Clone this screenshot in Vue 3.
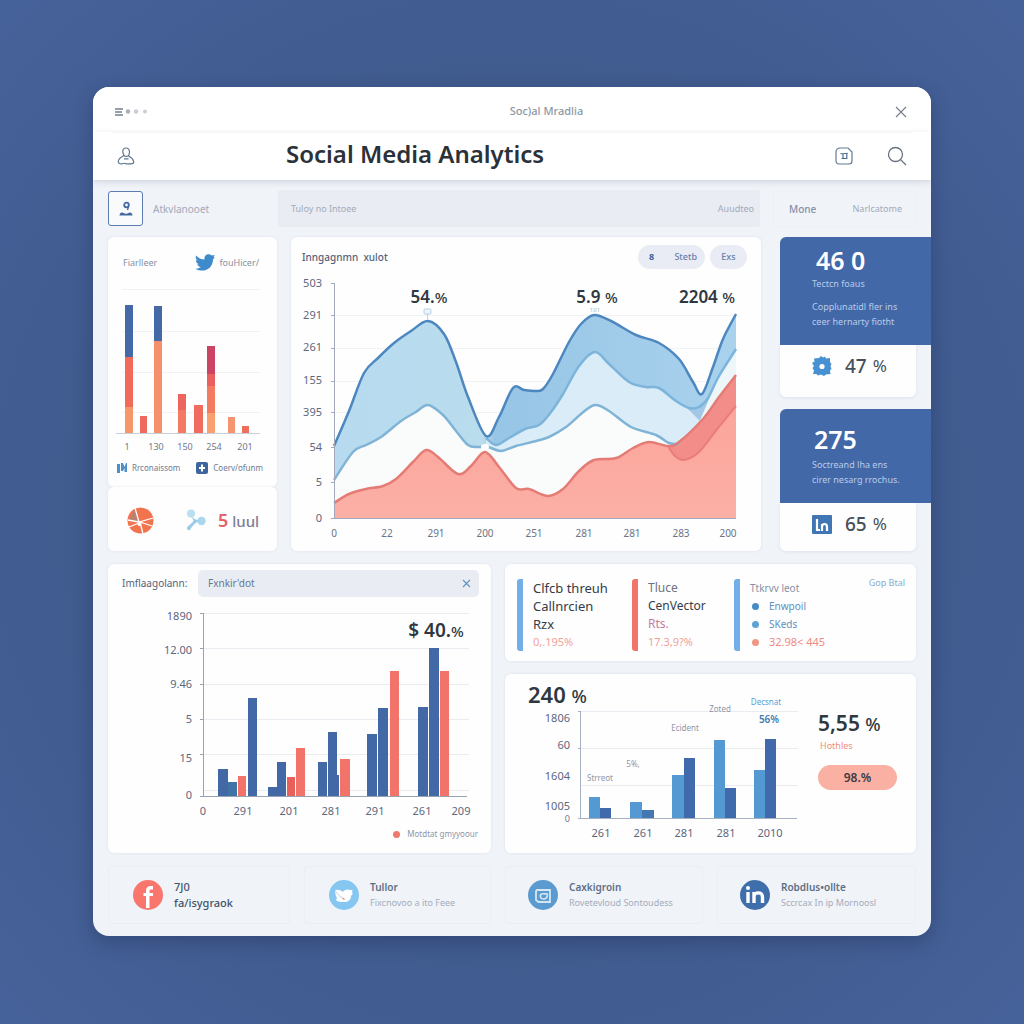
<script setup>
// Smooth line through a list of points (Catmull-Rom converted to Bezier)
const smooth = (pts) => {
  let d = `M${pts[0][0]} ${pts[0][1]}`
  for (let i = 0; i < pts.length - 1; i++) {
    const a = pts[i - 1] || pts[i]
    const b = pts[i]
    const c = pts[i + 1]
    const e = pts[i + 2] || c
    const x1 = b[0] + (c[0] - a[0]) / 6
    const y1 = b[1] + (c[1] - a[1]) / 6
    const x2 = c[0] - (e[0] - b[0]) / 6
    const y2 = c[1] - (e[1] - b[1]) / 6
    d += `C${x1.toFixed(1)} ${y1.toFixed(1)} ${x2.toFixed(1)} ${y2.toFixed(1)} ${c[0]} ${c[1]}`
  }
  return d
}
const area = (pts, base) => `${smooth(pts)}V${base}H${pts[0][0]}Z`

const reach = [[43, 176], [58, 141], [73, 103], [87, 88], [103, 73], [120, 61], [137, 51], [153, 64], [165, 92], [177, 127], [195, 166], [208, 147], [222, 118], [233, 120], [245, 121], [252, 119], [262, 104], [278, 72], [290, 54], [303, 45], [320, 51], [345, 65], [368, 73], [388, 89], [402, 112], [411, 124], [422, 97], [432, 69], [445, 44]]
const views = [[195, 168], [205, 175], [218, 168], [234, 159], [248, 155], [260, 142], [272, 124], [288, 96], [304, 82], [318, 94], [338, 112], [355, 117], [368, 118], [385, 131], [398, 138], [408, 137], [417, 128], [428, 106], [445, 79]]
const clicks = [[43, 210], [62, 182], [75, 175], [90, 167], [110, 151], [125, 142], [137, 135], [152, 145], [165, 161], [177, 175], [187, 177], [197, 177], [210, 181], [225, 176], [245, 171], [258, 167], [275, 157], [290, 144], [304, 135], [318, 141], [340, 157], [365, 165], [378, 173], [388, 174]]
const sales = [[43, 233], [58, 224], [75, 219], [92, 216], [105, 209], [122, 192], [135, 180], [147, 187], [167, 204], [180, 196], [194, 182], [208, 197], [225, 218], [238, 219], [257, 226], [272, 219], [288, 201], [303, 190], [325, 188], [342, 178], [358, 172], [377, 176], [388, 172], [412, 149], [428, 127], [445, 105]]
const costs = [[377, 176], [384, 186], [393, 190], [408, 182], [427, 158], [445, 136]]

const areaY = [['503', 13], ['291', 45], ['261', 77], ['155', 110], ['395', 142], ['54', 177], ['5', 212], ['0', 248]]
const areaX = [['0', 43], ['22', 96], ['291', 145], ['200', 194], ['251', 243], ['281', 293], ['281', 341], ['283', 390], ['200', 437]]

// [x, width, stacked parts as [top, bottom, colour]]
const stacks = [
  [17, 8, [[25, 77, '#4569a6'], [77, 127, '#f26a5c'], [127, 153, '#f7956b']]],
  [32, 7, [[136, 153, '#ee6a60']]],
  [46, 8, [[26, 61, '#4569a6'], [61, 153, '#f6906b']]],
  [70, 8, [[114, 130, '#ee6560'], [130, 153, '#f37b64']]],
  [86, 9, [[125, 153, '#ef6c5f']]],
  [99, 8, [[66, 94, '#cb4464'], [94, 106, '#e9605f'], [106, 133, '#f27b62'], [133, 153, '#f8a06f']]],
  [120, 7, [[137, 153, '#f5946f']]],
  [134, 7, [[146, 153, '#ee6f5e']]],
]
const stackX = [['1', 19], ['130', 48], ['150', 77], ['254', 106], ['201', 137]]

const NAVY = '#4269a5'
const CORAL = '#f1736a'
const groupBars = [
  [110, 10, 169, NAVY], [120, 9, 182, '#3f74a6'], [130, 8, 176, CORAL], [140, 9, 98, NAVY],
  [160, 9, 187, NAVY], [169, 9, 162, NAVY], [179, 8, 177, '#e8605c'], [188, 9, 148, CORAL],
  [210, 9, 162, NAVY], [220, 9, 132, NAVY], [229, 2, 175, NAVY], [232, 10, 159, CORAL],
  [259, 10, 134, NAVY], [270, 10, 108, NAVY], [282, 9, 71, CORAL],
  [310, 10, 107, NAVY], [321, 10, 48, NAVY], [332, 9, 71, CORAL],
]
const groupY = [['1890', 16], ['12.00', 50], ['9.46', 84], ['5', 119], ['15', 158], ['0', 195]]
const groupX = [['0', 95], ['291', 135], ['201', 181], ['281', 223], ['291', 267], ['261', 314], ['209', 353]]

const SKY = '#5599d3'
const BLUE = '#416aac'
const pairBars = [
  [84, 11, 123, SKY], [95, 11, 134, BLUE], [125, 12, 128, SKY], [137, 12, 136, '#4378b0'],
  [167, 12, 101, SKY], [179, 11, 84, BLUE], [209, 11, 66, SKY], [220, 11, 114, BLUE],
  [249, 11, 96, SKY], [260, 11, 65, BLUE],
]
const pairY = [['1806', 44], ['60', 71], ['1604', 102], ['1005', 132], ['0', 144]]
const pairX = [['261', 96], ['261', 138], ['281', 179], ['281', 221], ['2010', 265]]
</script>

<template>
  <div class="page">
    <div class="window">
      <div class="titlebar">
        <button class="icon-btn" aria-label="Menu">
          <svg width="34" height="10" viewBox="0 0 34 10">
            <path d="M1 2h8M1 5h7M1 8h8" stroke="#75808e" stroke-width="1.3" />
            <circle cx="14" cy="4.500" r="2.200" fill="#a9b0b9" />
            <circle cx="22" cy="4.500" r="2.200" fill="#c8cdd3" />
            <circle cx="31" cy="4.500" r="2" fill="#ccd0d6" />
          </svg>
        </button>
        <span class="caption">Soc)al Mradlia</span>
        <button class="icon-btn" aria-label="Close">
          <svg width="12" height="12" viewBox="0 0 12 12"><path d="M1 1l10 10M11 1L1 11" stroke="#747c87" stroke-width="1.1" /></svg>
        </button>
      </div>

      <header class="header">
        <button class="icon-btn" aria-label="Profile">
          <svg width="18" height="18" viewBox="0 0 18 18" fill="none" stroke="#5f7690" stroke-width="1.2">
            <path d="M9 1C6.600 1 5.600 2.800 5.800 5C6 6.700 6.800 8 7 8.500C5 9.500 1.500 12 1.200 14.500C1.200 16.500 3 17 5 16.800C7 16 8 16 9 16.700C10 17.200 12 16.800 14 16.900C16 17 17 16 16.600 14.300C16 12 13.500 10 11.500 8.800C12 7.500 12.600 6.500 12.500 4.600C12.200 2.200 11 1 9 1Z" />
            <path d="M6.600 8.400C8 9.400 10.500 9.400 11.500 8.800M7 11.800h4.500" />
          </svg>
        </button>
        <h1>Social Media Analytics</h1>
        <div class="header-tools">
          <button class="icon-btn" aria-label="Apps">
            <svg width="18" height="18" viewBox="0 0 18 18" fill="none" stroke="#627a95" stroke-width="1.2">
              <path d="M5 1h8l4 4v9a3 3 0 0 1-3 3H4a3 3 0 0 1-3-3V5a4 4 0 0 1 4-4z" />
              <path d="M5.500 6.500L8 7v4.500M8.500 6.500h3.300v5H6.500M11.500 7l1-1" stroke="#4d6d93" stroke-width="1.200" />
            </svg>
          </button>
          <button class="icon-btn" aria-label="Search">
            <svg width="20" height="20" viewBox="0 0 20 20" fill="none" stroke="#68717d" stroke-width="1.300">
              <circle cx="8.500" cy="8.500" r="7" /><path d="M13.600 13.600L19 19" />
            </svg>
          </button>
        </div>
      </header>

      <nav class="toolbar">
        <div class="account">
          <button class="avatar" aria-label="Account">
            <svg width="14" height="16" viewBox="0 0 14 16">
              <circle cx="7.500" cy="4" r="2.300" fill="none" stroke="#4468a0" stroke-width="1.800" />
              <path d="M9.500 5.500L8.500 9" stroke="#4468a0" stroke-width="1.300" />
              <path d="M.5 14.500C.5 12 2.500 11 4 11.800C6 13 8 13 10 11.800C11.500 11 13.500 12 13.500 14.500Z" fill="#4468a0" />
            </svg>
          </button>
          <a href="#">Atkvlanooet</a>
        </div>
        <div class="searchbar">
          <input aria-label="Search" placeholder="Tuloy no Intoee" />
          <a href="#">Auudteo</a>
        </div>
        <div class="links">
          <a href="#" class="strong">Mone</a>
          <a href="#">Narlcatome</a>
        </div>
      </nav>

      <main>
        <div class="top-row">
          <div class="left-col">
            <section class="card stack-card">
              <div class="stack-head">
                <span>Fiarlleer</span>
                <span class="tw">
                  <svg width="20" height="17" viewBox="0 0 20 17"><path d="M1 1.500C3.500 4 6 5.500 9.500 5.600C9 2.500 11 .3 13.500 .3C15 .3 16 .9 16.800 1.600L19.600 .9L18.600 3.200L19.800 3.300L18 5.400C18 11.500 13.500 16.600 7 16.600C4.300 16.600 2 16 .3 14.800C2.500 14.800 4.400 14.200 5.800 13C3.900 12.800 2.700 11.700 2.200 10.300L3.900 10.200C2 9.500 .9 8 .9 6.200L2.500 6.600C.8 5.200 .4 3.300 1 1.500Z" fill="#3f8acb" /></svg>
                  fouHicer/
                </span>
              </div>
              <svg class="chart" viewBox="0 0 169 175">
                <path d="M14 9.500H152M14 51.500H152M14 92.500H152M14 132.500H152" class="grid" />
                <g v-for="(s, i) in stacks" :key="i">
                  <rect v-for="(p, j) in s[2]" :key="j" :x="s[0]" :y="p[0]" :width="s[1]" :height="p[1] - p[0]" :fill="p[2]" />
                </g>
                <path d="M8 153.500H152" stroke="#c9cfda" />
                <text v-for="(t, i) in stackX" :key="i" :x="t[1]" y="170" class="tick small mid">{{ t[0] }}</text>
              </svg>
              <div class="stack-legend">
                <span>
                  <svg width="10" height="10" viewBox="0 0 10 10"><path d="M0 1h3v9H0zM4 0h2l1.500 4L9 0h1v9H7.500V5L6 8H4z" fill="#4c8fc9" /></svg>
                  Rrconaissom
                </span>
                <span>
                  <svg width="12" height="12" viewBox="0 0 12 12"><rect width="12" height="12" rx="2" fill="#3f659f" /><path d="M6 2.500v7M3 6h6" stroke="#fff" stroke-width="2" /></svg>
                  Coerv/ofunm
                </span>
              </div>
            </section>
            <section class="card mini">
              <svg width="27" height="27" viewBox="0 0 27 27">
                <circle cx="13.500" cy="13.500" r="13" fill="#f2744f" />
                <path d="M8 2L2 13L12 15Z" fill="#b98272" />
                <path d="M8 1L12 15L26 11M12 15L1 13M12 16L2 20M13 15L16 27M13 15L25 19" stroke="#fff" stroke-width="1.300" fill="none" />
                <circle cx="12.500" cy="17" r="2" fill="#fff" />
              </svg>
              <svg width="20" height="22" viewBox="0 0 20 22">
                <ellipse cx="5" cy="4.500" rx="4" ry="4" fill="#b9dff0" /><circle cx="15.500" cy="12" r="4.200" fill="#aad6ee" />
                <path d="M5 7C7 9 9 11 14 11.500C9 14 7 16 4 21C1 22 0 19 2 17C5 15 7 13 7.500 11.500Z" fill="#9ecbe8" />
              </svg>
              <strong><b>5</b> luul</strong>
            </section>
          </div>

          <section class="card">
            <div class="area-head">
              <h2>Inngagnmn &nbsp;xulot</h2>
              <div class="pills">
                <button class="pill wide"><b>8</b><span>Stetb</span></button>
                <button class="pill">Exs</button>
              </div>
            </div>
            <svg class="chart" viewBox="0 0 470 281">
              <defs>
                <linearGradient id="fillReach" x1="43" x2="445" gradientUnits="userSpaceOnUse">
                  <stop offset="0" stop-color="#b7daf0" /><stop offset=".37" stop-color="#b9dded" />
                  <stop offset=".4" stop-color="#97c5e6" /><stop offset="1" stop-color="#a9d2ed" />
                </linearGradient>
                <linearGradient id="fillSales" x1="0" y1="170" x2="0" y2="248" gradientUnits="userSpaceOnUse">
                  <stop offset="0" stop-color="#fca79e" /><stop offset="1" stop-color="#fbb0a6" />
                </linearGradient>
              </defs>
              <path d="M43 45.500H445M43 78.500H445M43 111.500H445M43 142.500H445M43 177.500H445M43 212.500H445" class="grid" />
              <path :d="area(reach, 248)" fill="url(#fillReach)" />
              <path :d="area(views, 248)" fill="#d9ecf7" />
              <path d="M395 137C402 139 410 138 419 127L409 151Z" fill="#a3c8e6" />
              <path d="M428 106L445 79V115L405 160Z" fill="#edf6f9" />
              <path :d="area(clicks, 248)" fill="#fafbfb" />
              <path :d="area(sales, 248)" fill="url(#fillSales)" />
              <path :d="smooth(costs) + 'V105L428 127L412 149L388 172Z'" fill="#f38d8a" />
              <g fill="none" stroke-width="2.500">
                <path :d="smooth(clicks)" stroke="#80b4d6" />
                <path :d="smooth(views)" stroke="#7db4dc" />
                <path :d="smooth(reach)" stroke="#4d87bf" />
                <path :d="smooth(costs)" stroke="#e97e79" stroke-width="2" />
                <path :d="smooth(sales)" stroke="#e47c76" />
              </g>
              <ellipse cx="194" cy="177" rx="4" ry="3" fill="#fff" />
              <path d="M136.500 44V50" stroke="#bcd5ec" />
              <rect x="133" y="39" width="7" height="5" rx="1" fill="#eef5fb" stroke="#b5d0ea" />
              <path d="M43.500 13V248M40 13.500h3M40 45.500h3M40 78.500h3M40 111.500h3M40 142.500h3M40 177.500h3M40 212.500h3M40 248.500H445" stroke="#a3a8bd" />
              <text v-for="(t, i) in areaY" :key="'y' + i" x="31" :y="t[1] + 4" class="tick end">{{ t[0] }}</text>
              <text v-for="(t, i) in areaX" :key="'x' + i" :x="t[1]" y="267" class="tick plain mid">{{ t[0] }}</text>
              <text x="138" y="33" class="value mid">54.<tspan class="pct">%</tspan></text>
              <text x="306" y="33" class="value mid">5.9 <tspan class="pct">%</tspan></text>
              <text x="416" y="33" class="value mid">2204 <tspan class="pct">%</tspan></text>
              <text x="304" y="42" class="hint mid">101</text>
            </svg>
          </section>

          <aside class="right-col">
            <section class="stat">
              <div class="stat-top">
                <strong>46 0</strong>
                <p class="lead">Tectcn foaus</p>
                <p>Copplunatidl fler ins<br />ceer hernarty fiotht</p>
              </div>
              <div class="stat-foot">
                <svg width="20" height="20" viewBox="0 0 20 20"><path d="M7 2L9 0L11 1.500L13 .5L14 2.500L18 2L18 6L19.500 8L18.500 10L19.500 13L18 14.500L18.500 18L14 18.500L12 20L9 18.500L6 19.500L4.500 18L1 18L2 14.500L.5 12L2 10L0 7L2.500 5.500L2 2.500Z" fill="#4791d2" /><circle cx="10" cy="10.500" r="2.600" fill="#fff" /></svg>
                <b>47</b><i>%</i>
              </div>
            </section>
            <section class="stat second">
              <div class="stat-top">
                <strong>275</strong>
                <p>Soctreand lha ens<br />cirer nesarg rrochus.</p>
              </div>
              <div class="stat-foot">
                <svg width="20" height="19" viewBox="0 0 20 19"><rect width="20" height="19" rx="1" fill="#4076b3" /><path d="M5 4v11h3M10 16V9M10 12c0-4 5-4 5 0v4" fill="none" stroke="#fff" stroke-width="2.200" /></svg>
                <b>65</b><i>%</i>
              </div>
            </section>
          </aside>
        </div>

        <div class="mid-row">
          <section class="card group-card">
            <div class="group-head">
              <label for="filter">Imflaagolann:</label>
              <div class="field">
                <input id="filter" value="Fxnkir'dot" />
                <button class="icon-btn" aria-label="Clear">
                  <svg width="9" height="9" viewBox="0 0 9 9"><path d="M1 1l7 7M8 1L1 8" stroke="#5d93c4" stroke-width="1.100" /></svg>
                </button>
              </div>
            </div>
            <svg class="chart" viewBox="0 0 383 222">
              <path d="M96 13.500H361M96 48.500H361M96 84.500H361M96 119.500H361M96 154.500H361M96 190.500H361" class="grid dark" />
              <rect v-for="(b, i) in groupBars" :key="i" :x="b[0]" :y="b[2]" :width="b[1]" :height="196 - b[2]" :fill="b[3]" />
              <path d="M95.500 13V196M92 13.500h3M92 48.500h3M92 84.500h3M92 119.500h3M92 154.500h3M92 196.500H359" stroke="#97a3b4" fill="none" />
              <text v-for="(t, i) in groupY" :key="'y' + i" x="84" :y="t[1] + 4" class="tick end">{{ t[0] }}</text>
              <text v-for="(t, i) in groupX" :key="'x' + i" :x="t[1]" y="215" class="tick mid">{{ t[0] }}</text>
              <text x="328" y="37" class="value big mid">$ 40.<tspan class="pct">%</tspan></text>
            </svg>
            <div class="group-legend"><i></i>Motdtat gmyyoour</div>
          </section>

          <div class="side">
            <section class="card kpis">
              <div class="kpi">
                <p>Clfcb threuh<br />Callnrcien<br />Rzx</p>
                <em>0,.195%</em>
              </div>
              <div class="kpi red">
                <p><span>Tluce</span><br />CenVector<br /><u>Rts.</u></p>
                <em>17.3,9?%</em>
              </div>
              <div class="kpi list">
                <h3>Ttkrvv leot</h3>
                <ul>
                  <li>Enwpoil</li>
                  <li class="s2">SKeds</li>
                  <li class="s3">32.98&lt; 445</li>
                </ul>
              </div>
              <a href="#" class="goal">Gop Btal</a>
            </section>

            <section class="card pair-card">
              <svg class="chart" viewBox="0 0 306 179">
                <path d="M76 37.500H293M76 74.500H293M76 111.500H293" class="grid dark" />
                <rect v-for="(b, i) in pairBars" :key="i" :x="b[0]" :y="b[2]" :width="b[1]" :height="144 - b[2]" :fill="b[3]" />
                <path d="M75.500 37V144M73 37.500h3M73 74.500h3M73 144.500H292" stroke="#a5b1c2" fill="none" />
                <text x="23" y="29" class="value huge">240 <tspan class="pct">%</tspan></text>
                <text v-for="(t, i) in pairY" :key="'y' + i" x="65" :y="t[1] + 4" class="tick end" :class="{ small: t[0] === '0' }">{{ t[0] }}</text>
                <text v-for="(t, i) in pairX" :key="'x' + i" :x="t[1]" y="163" class="tick mid">{{ t[0] }}</text>
                <text x="95" y="107" class="note mid">Strreot</text>
                <text x="128" y="93" class="note mid">5%,</text>
                <text x="180" y="57" class="note mid">Ecident</text>
                <text x="215" y="38" class="note mid">Zoted</text>
                <text x="261" y="31" class="note mid sky">Decsnat</text>
                <text x="264" y="49" class="note mid deep">56%</text>
              </svg>
              <div class="rate">
                <strong>5,55 <small>%</small></strong>
                <span>Hothles</span>
                <button>98.%</button>
              </div>
            </section>
          </div>
        </div>

        <footer class="networks">
          <a href="#" class="net">
            <svg width="30" height="30" viewBox="0 0 30 30"><circle cx="15" cy="15" r="15" fill="#f9766d" /><path d="M13 28V16H10.500V13H13V10.500C13 7.500 15 6 17.500 6H20V9.500H18C17 9.500 16.500 10 16.500 11V13H20V16H16.500V28Z" fill="#fff" /></svg>
            <span class="dark"><b>7J0</b><b>fa/isygraok</b></span>
          </a>
          <a href="#" class="net">
            <svg width="30" height="30" viewBox="0 0 30 30"><circle cx="15" cy="15" r="15" fill="#86c7f1" /><path d="M6.500 10C9 9.500 12 10.500 14 12C15 10 18 9 20 10H23.500L23 13L24 13.500L22 16C22 20 19 22 14.500 22C11 22 8 21.500 7 20L8 18C6.500 16 6 13 6.500 10Z" fill="#fff" /><path d="M7 12C9 15 12 17 15.500 19.500" stroke="#b9d3e6" stroke-width="1" fill="none" /><path d="M13.500 18L15.500 19.500" stroke="#ea8d88" stroke-width="1.2" /></svg>
            <span><b>Tullor</b><small>Fixcnovoo a ito Feee</small></span>
          </a>
          <a href="#" class="net">
            <svg width="30" height="30" viewBox="0 0 30 30"><circle cx="15" cy="15" r="15" fill="#5b9bcf" /><path d="M9 10h13v12H10.500L8 20V11z" fill="none" stroke="#d3e7f5" stroke-width="1.800" /><path d="M19.500 14C19.500 18 17.500 19 15.500 19C12 19 11.500 15 13.500 14C15 13.200 17 14.500 19.500 13.500" fill="none" stroke="#d3e7f5" stroke-width="1.600" /></svg>
            <span><b>Caxkigroin</b><small>Rovetevloud Sontoudess</small></span>
          </a>
          <a href="#" class="net">
            <svg width="30" height="30" viewBox="0 0 30 30"><circle cx="15" cy="15" r="15" fill="#3f6faa" /><circle cx="8" cy="8" r="2" fill="#fff" /><path d="M8 12V23M14 23V12M14 17C14 11.500 22.500 11.500 22.500 17V23" fill="none" stroke="#fff" stroke-width="3.400" /></svg>
            <span><b>Robdlus&#8226;ollte</b><small>Sccrcax In ip Mornoosl</small></span>
          </a>
        </footer>
      </main>
    </div>
  </div>
</template>

<style>
body {
  margin: 0;
  background: #45608f;
}
</style>

<style scoped>
* {
  box-sizing: border-box;
}
.page {
  min-height: 100vh;
  padding: 87px 93px 88px;
  background: radial-gradient(ellipse at center, #3d5788 40%, #46629a 100%);
  font-family: "Noto Sans", "Open Sans", sans-serif;
  font-size: 10px;
  line-height: 16px;
  color: #6d7c92;
}
h1, h2, h3, p, ul {
  margin: 0;
  padding: 0;
  font-weight: 400;
}
a {
  color: inherit;
  text-decoration: none;
}
button, input {
  font: inherit;
  color: inherit;
  border: 0;
  background: none;
  padding: 0;
  margin: 0;
}
svg {
  display: block;
  flex: none;
}
.icon-btn {
  display: block;
}
.window {
  border-radius: 16px;
  overflow: hidden;
  background: #f0f3f8;
  box-shadow: 0 6px 18px rgba(25, 40, 80, 0.35);
}

.titlebar {
  display: flex;
  align-items: center;
  justify-content: space-between;
  height: 45px;
  padding: 4px 24px 0 21px;
  background: #fff;
}
.caption {
  font-size: 11px;
  font-weight: 500;
  color: #8d98a5;
  padding: 0 0 2px 50px;
}
.header {
  position: relative;
  display: flex;
  align-items: center;
  height: 48px;
  padding: 0 24px;
  background: linear-gradient(#f3f5f7, #f3f5f7) 50% 0 / calc(100% - 38px) 1px no-repeat #fff;
  box-shadow: 0 2px 6px rgba(60, 80, 120, 0.18);
}
.header h1 {
  flex: 1;
  padding: 0 0 4px 151px;
  font-size: 24px;
  line-height: 32px;
  font-weight: 600;
  color: #2b3138;
}
.header-tools {
  display: flex;
  align-items: center;
  gap: 34px;
}

.toolbar {
  display: grid;
  grid-template-columns: minmax(0, 157fr) minmax(0, 482fr) minmax(0, 143fr);
  gap: 13px;
  align-items: center;
  padding: 10px 15px;
  color: #a2a9b8;
}
.account {
  display: flex;
  align-items: center;
  gap: 10px;
}
.avatar {
  display: grid;
  place-items: center;
  width: 35px;
  height: 35px;
  border: 1px solid #5a7cae;
  border-radius: 3px;
  background: #f8fafc;
}
.searchbar {
  display: flex;
  align-items: center;
  height: 37px;
  padding: 0 6px 0 13px;
  border-radius: 3px;
  background: #e9ecf3;
  font-size: 9px;
}
.searchbar input {
  flex: 1;
  min-width: 0;
}
.searchbar input::placeholder {
  color: #a4abb9;
}
.links {
  display: flex;
  align-items: center;
  justify-content: space-between;
  height: 37px;
  padding: 0 13px 0 15px;
  border: 1px solid #edf0f5;
  font-size: 9px;
}
.links .strong {
  font-size: 10px;
  font-weight: 500;
  color: #8590ab;
}

.card {
  background: #fefefe;
  border-radius: 6px;
  box-shadow: 0 0 3px rgba(150, 165, 195, 0.2);
}
.chart {
  width: 100%;
  height: auto;
}
.grid {
  stroke: #f0f2f4;
}
.grid.dark {
  stroke: #e9ecf0;
}
.tick {
  font-size: 11px;
  fill: #5d6780;
}
.tick.plain {
  font-size: 10px;
  fill: #6c7484;
}
.tick.small {
  font-size: 9px;
  fill: #71798b;
}
.mid {
  text-anchor: middle;
}
.end {
  text-anchor: end;
}
.value {
  font-size: 17px;
  font-weight: 600;
  fill: #2f3840;
}
.value .pct {
  font-size: 15px;
  font-weight: 500;
}
.value.big {
  font-size: 19px;
}
.value.huge {
  font-size: 22px;
}
.value.huge .pct {
  font-size: 18px;
}
.hint {
  font-size: 6px;
  fill: #a8c0ba;
}
.note {
  font-size: 8px;
  fill: #8f97a6;
}
.note.sky {
  fill: #5c9fd4;
}
.note.deep {
  font-size: 10px;
  font-weight: 600;
  fill: #3f7aae;
}

.top-row {
  display: grid;
  grid-template-columns: minmax(0, 169fr) minmax(0, 470fr) minmax(0, 156fr);
  gap: 14px;
  padding-left: 15px;
}
.right-col {
  padding-left: 5px;
}
.stack-head {
  display: flex;
  align-items: center;
  justify-content: space-between;
  height: 43px;
  padding: 8px 18px 0 15px;
  font-size: 9px;
  color: #8791a3;
}
.tw {
  display: flex;
  align-items: center;
  gap: 4px;
}
.stack-legend {
  display: flex;
  justify-content: space-between;
  height: 32px;
  padding: 5px 14px 0 9px;
  font-size: 8px;
}
.stack-legend span {
  display: flex;
  align-items: center;
  gap: 5px;
  height: 16px;
}
.mini {
  display: flex;
  align-items: center;
  height: 64px;
  padding: 2px 0 0 19px;
}
.mini svg + svg {
  margin: 0 12px 0 32px;
}
.mini strong {
  font-size: 15px;
  font-weight: 500;
  color: #7f7d95;
}
.mini b {
  font-size: 18px;
  font-weight: 600;
  color: #e2646a;
}
.area-head {
  display: flex;
  align-items: center;
  justify-content: space-between;
  height: 33px;
  padding: 7px 14px 0 11px;
}
.area-head h2 {
  font-size: 10px;
  font-weight: 500;
  color: #58617a;
}
.pills {
  display: flex;
  gap: 5px;
}
.pill {
  height: 24px;
  width: 37px;
  border-radius: 12px;
  background: #e9ecf4;
  color: #6680ac;
  font-size: 9px;
  font-weight: 500;
}
.pill.wide {
  display: flex;
  align-items: center;
  justify-content: space-between;
  width: 67px;
  padding: 0 8px 0 11px;
}
.pill b {
  color: #43659c;
}

.stat-top {
  height: 108px;
  padding: 7px 0 0 32px;
  border-radius: 6px 0 0 0;
  background: #4268a8;
  color: #b9cbe8;
  font-size: 9px;
  line-height: 15px;
  white-space: nowrap;
}
.stat-top strong {
  display: block;
  padding-left: 4px;
  font-size: 25px;
  line-height: 32px;
  font-weight: 600;
  color: #fff;
}
.stat-top .lead {
  padding-bottom: 8px;
}
.stat-foot {
  display: flex;
  align-items: center;
  height: 52px;
  margin-right: 15px;
  padding: 0 0 10px 32px;
  border-radius: 0 0 6px 6px;
  background: #fefefe;
  box-shadow: 0 1px 3px rgba(150, 165, 195, 0.2);
  font-size: 19px;
  color: #46505c;
}
.stat-foot b {
  margin-left: 13px;
  font-weight: 500;
}
.stat-foot i {
  margin-left: 6px;
  font-size: 17px;
  font-style: normal;
}
.second {
  margin-top: 12px;
}
.second .stat-top {
  height: 94px;
  padding-top: 14px;
}
.second .stat-top p {
  padding-top: 2px;
}
.second .stat-top strong {
  padding-left: 2px;
}
.second .stat-foot {
  height: 48px;
  padding-bottom: 6px;
}

.mid-row {
  display: grid;
  grid-template-columns: minmax(0, 383fr) minmax(0, 411fr);
  gap: 14px;
  padding: 13px 15px;
}
.group-head {
  display: flex;
  align-items: center;
  justify-content: space-between;
  height: 36px;
  padding: 2px 12px 0 14px;
}
.group-head label {
  font-size: 10px;
  color: #56607a;
}
.field {
  display: flex;
  align-items: center;
  width: calc(100% - 76px);
  height: 27px;
  padding: 0 8px 0 10px;
  border-radius: 5px;
  background: #e9ecf3;
  color: #667893;
}
.field input {
  flex: 1;
  min-width: 0;
}
.group-legend {
  display: flex;
  align-items: center;
  justify-content: flex-end;
  gap: 7px;
  height: 31px;
  padding: 0 13px 7px 0;
  font-size: 8px;
  color: #8d97a8;
}
.group-legend i {
  width: 7px;
  height: 7px;
  border-radius: 50%;
  background: #ee7a6d;
}
.side {
  display: flex;
  flex-direction: column;
  gap: 13px;
}
.kpis {
  display: grid;
  grid-template-columns: minmax(0, 115fr) minmax(0, 102fr) minmax(0, 131fr) minmax(0, 40fr);
  height: 97px;
  padding: 15px 11px 13px 12px;
}
.kpi {
  border-left: 6px solid #74aee9;
  border-radius: 3px;
  padding-left: 10px;
  font-size: 13px;
  line-height: 18px;
  color: #333c48;
  white-space: nowrap;
}
.kpi.red {
  border-color: #f1756b;
  font-size: 12px;
}
.kpi.red span {
  color: #6b7280;
}
.kpi u {
  text-decoration: none;
  color: #c27d9c;
}
.kpi em {
  display: block;
  font-style: normal;
  font-size: 11px;
  color: #f0a29b;
}
.kpi h3 {
  font-size: 10px;
  line-height: 18px;
  color: #8591a5;
}
.kpi ul {
  list-style: none;
}
.kpi li {
  display: flex;
  align-items: center;
  gap: 10px;
  padding-left: 2px;
  font-size: 10px;
  line-height: 18px;
  color: #5f8fbe;
}
.kpi li::before {
  content: "";
  width: 7px;
  height: 7px;
  border-radius: 50%;
  background: #4b8bc4;
}
.kpi .s2::before {
  background: #5fa3d6;
}
.kpi .s3 {
  font-size: 11px;
  color: #ee8a84;
}
.kpi .s3::before {
  background: #f09883;
}
.goal {
  font-size: 9px;
  line-height: 8px;
  text-align: right;
  white-space: nowrap;
  color: #86acd1;
}
.pair-card {
  display: grid;
  grid-template-columns: minmax(0, 306fr) minmax(0, 105fr);
}
.rate {
  padding: 36px 0 0 7px;
}
.rate strong {
  display: block;
  font-size: 21px;
  line-height: 26px;
  font-weight: 600;
  color: #2f3840;
  white-space: nowrap;
}
.rate small {
  font-size: 18px;
  font-weight: 500;
}
.rate span {
  display: block;
  padding-left: 2px;
  font-size: 9px;
  line-height: 18px;
  color: #ef8f7d;
}
.rate button {
  display: block;
  width: 79px;
  height: 25px;
  margin-top: 10px;
  border-radius: 13px;
  background: #fab0a2;
  color: #3f3a42;
  font-size: 12px;
  font-weight: 600;
}

.networks {
  display: grid;
  grid-template-columns: minmax(0, 182fr) minmax(0, 187fr) minmax(0, 198fr) minmax(0, 199fr);
  gap: 14px;
  padding: 0 15px 12px;
}
.net {
  display: flex;
  align-items: center;
  gap: 11px;
  height: 58px;
  padding-left: 24px;
  border: 1px solid #ebeff4;
  border-radius: 3px;
  white-space: nowrap;
}
.net:nth-child(n + 3) {
  padding-left: 22px;
}
.net b {
  display: block;
  font-size: 10px;
  font-weight: 600;
  color: #5d7086;
}
.net .dark b {
  font-size: 11px;
  font-weight: 500;
  color: #41536b;
}
.net small {
  display: block;
  font-size: 9px;
  color: #a3adbd;
}
</style>
